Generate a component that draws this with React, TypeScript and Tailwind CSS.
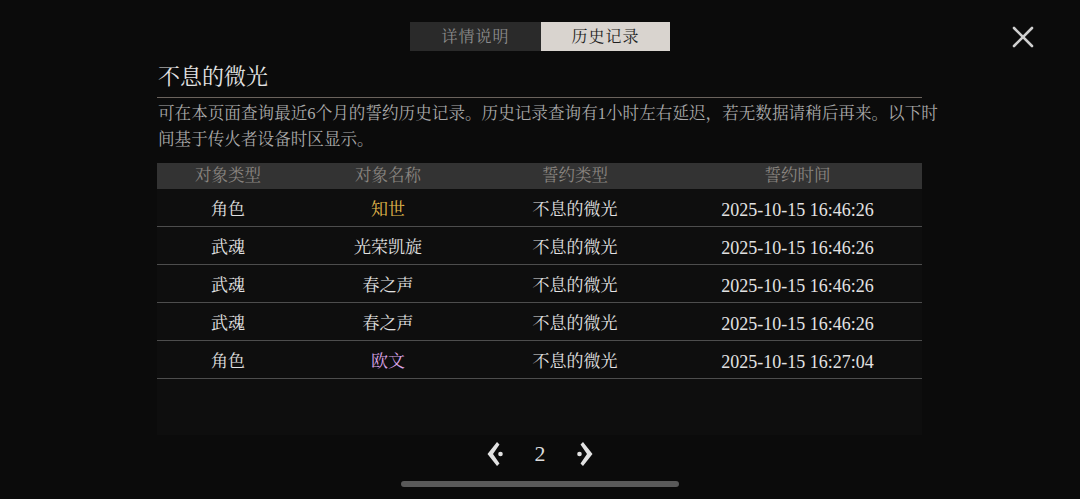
import React from "react";

const FONT = {
  fontFamily:
    '"Liberation Serif", "Noto Serif CJK SC", "Noto Sans CJK SC", serif',
};

const rows = [
  { type: "角色", name: "知世", color: "text-[#e3b94c]", pledge: "不息的微光", time: "2025-10-15 16:46:26" },
  { type: "武魂", name: "光荣凯旋", color: "text-[#e2e2e2]", pledge: "不息的微光", time: "2025-10-15 16:46:26" },
  { type: "武魂", name: "春之声", color: "text-[#e2e2e2]", pledge: "不息的微光", time: "2025-10-15 16:46:26" },
  { type: "武魂", name: "春之声", color: "text-[#e2e2e2]", pledge: "不息的微光", time: "2025-10-15 16:46:26" },
  { type: "角色", name: "欧文", color: "text-[#d9a3e6]", pledge: "不息的微光", time: "2025-10-15 16:27:04" },
];

const cols = "grid grid-cols-[142px_178px_196px_249px]";

function Arrow({ flip }: { flip?: boolean }) {
  return (
    <svg
      width="20"
      height="26"
      viewBox="0 0 20 26"
      fill="#e2e2e2"
      style={flip ? { transform: "scaleX(-1)" } : undefined}
    >
      <path d="M11 1 L1.5 13 L11 25 L13.5 22.5 L7 13 L13.5 3.5 Z" />
      <circle cx="14.5" cy="13" r="2.3" />
    </svg>
  );
}

export default function App() {
  return (
    <div className="relative w-[1080px] h-[499px] bg-[#0b0b0b] overflow-hidden" style={FONT}>
      {/* close */}
      <button className="absolute left-[1012px] top-[26px] w-[22px] h-[22px]">
        <svg width="22" height="22" viewBox="0 0 22 22" stroke="#cfcfcf" strokeWidth="2.6" strokeLinecap="round">
          <line x1="2" y1="2" x2="20" y2="20" />
          <line x1="20" y1="2" x2="2" y2="20" />
        </svg>
      </button>

      <div className="flex flex-col items-center pt-[22px]">
        <div className="flex h-[29px]">
          <div className="w-[131px] h-full bg-[#2a2a2a] text-[#8c8c8c] text-[16px] flex items-center justify-center tracking-[1px]">
            详情说明
          </div>
          <div className="w-[129px] h-full bg-[#d9d4cf] text-[#1e1e1e] text-[16px] flex items-center justify-center tracking-[1px]">
            历史记录
          </div>
        </div>
      </div>

      <div className="ml-[157px] w-[800px]">
        <div className="mt-[11px] w-[765px] h-[36px] border-b border-[#6b635d] text-[22px] leading-[30px] text-[#e4e4e4] pl-[1px]">
          不息的微光
        </div>
        <div className="mt-[3px] text-[16.6px] leading-[26px] text-[#a9a9a9] pl-[1px] whitespace-nowrap">
          <div>可在本页面查询最近6个月的誓约历史记录。历史记录查询有1小时左右延迟，若无数据请稍后再来。以下时</div>
          <div>间基于传火者设备时区显示。</div>
        </div>

        <div className="mt-[10px] w-[765px] h-[272px] bg-[#0e0e0e]">
          <div className={`${cols} h-[26px] bg-[#333333] text-[#8a8580] text-[16.5px] items-center text-center`}>
            <div>对象类型</div>
            <div>对象名称</div>
            <div>誓约类型</div>
            <div>誓约时间</div>
          </div>
          {rows.map((r, i) => (
            <div
              key={i}
              className={`${cols} h-[38px] border-b border-[#4d4d4d] text-[17px] text-[#e2e2e2] items-center text-center pt-[5px]`}
            >
              <div>{r.type}</div>
              <div className={r.color}>{r.name}</div>
              <div>{r.pledge}</div>
              <div className="text-[18px]">{r.time}</div>
            </div>
          ))}
        </div>
      </div>

      <div className="flex items-center justify-center h-[37px] gap-[26px]">
        <Arrow />
        <span className="text-[22px] text-[#dcdcdc] w-[16px] text-center">2</span>
        <Arrow flip />
      </div>

      <div className="mt-[9px] mx-auto w-[278px] h-[6px] rounded-full bg-[#5a5a5a]" />
    </div>
  );
}
